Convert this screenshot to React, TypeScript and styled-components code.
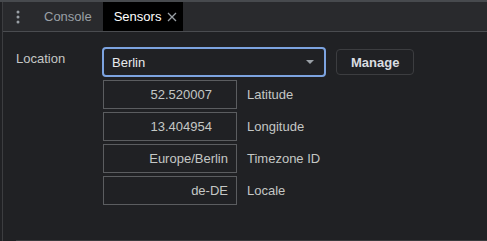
import * as React from 'react'
import styled, { createGlobalStyle } from 'styled-components'

const GlobalStyle = createGlobalStyle`
  html, body {
    margin: 0;
    padding: 0;
    background: #202124;
  }
  body {
    font-family: 'Liberation Sans', Arial, sans-serif;
    font-size: 13px;
    color: #e8eaed;
  }
  #root {
    height: 241px;
    overflow: hidden;
  }
`

const Frame = styled.div`
  height: 100%;
  display: flex;
  flex-direction: column;
  border-top: 2px solid #474a4e;
  box-sizing: border-box;
  padding-left: 2px;
`

const Body = styled.div`
  flex: 1;
  display: flex;
  flex-direction: column;
  border-left: 1px solid #3c3d40;
`

const TabBar = styled.div`
  height: 29px;
  display: flex;
  align-items: stretch;
  background: #292a2d;
  border-bottom: 1px solid #4a4c50;
`

const MenuButton = styled.div`
  width: 30px;
  display: flex;
  align-items: center;
  justify-content: center;
`

const Tab = styled.div<{ $active?: boolean }>`
  display: flex;
  align-items: center;
  gap: 6px;
  padding: 0 ${(p) => (p.$active ? '6px' : '11px')} 0 11px;
  background: ${(p) => (p.$active ? '#000000' : 'transparent')};
  color: ${(p) => (p.$active ? '#ffffff' : '#9aa0a6')};
  font-size: 13px;
`

const CloseIcon = styled.span`
  display: flex;
  align-items: center;
`

const Content = styled.div`
  flex: 1;
  padding: 15px 0 0 13px;
  display: flex;
  flex-direction: column;
`

const Section = styled.div`
  flex: 1;
  display: grid;
  grid-template-columns: 86px auto;
  align-content: start;
  border-bottom: 1px solid #3a3b3e;
`

const FieldLabel = styled.div`
  padding-top: 4px;
  color: #c4c7c5;
`

const Fields = styled.div`
  display: flex;
  flex-direction: column;
  gap: 3px;
`

const SelectRow = styled.div`
  display: flex;
  align-items: center;
  gap: 10px;
`

const Select = styled.div`
  width: 224px;
  height: 30px;
  box-sizing: border-box;
  border: 2px solid #7ca3e0;
  border-radius: 4px;
  background: #202124;
  display: flex;
  align-items: center;
  justify-content: space-between;
  padding: 0 10px 0 8px;
  font-size: 13px;
  color: #e8eaed;
`

const Caret = styled.span`
  width: 0;
  height: 0;
  border-left: 4px solid transparent;
  border-right: 4px solid transparent;
  border-top: 4px solid #9aa0a6;
`

const Button = styled.div`
  height: 24px;
  padding: 0 14px;
  border: 1px solid #3c3d40;
  border-radius: 4px;
  display: flex;
  align-items: center;
  font-weight: bold;
  color: #dadce0;
  font-size: 13px;
`

const InputRow = styled.div`
  display: flex;
  align-items: center;
  gap: 10px;
  margin-left: 1px;
`

const Input = styled.div<{ $numeric?: boolean }>`
  width: 134px;
  height: 29px;
  border: 1px solid #5b5d60;
  box-sizing: border-box;
  display: flex;
  align-items: center;
  justify-content: flex-end;
  padding-right: ${(p) => (p.$numeric ? '24px' : '8px')};
  color: #c4c7c5;
  font-size: 13px;
`

const InputLabel = styled.div`
  color: #c4c7c5;
`

const rows = [
  { value: '52.520007', label: 'Latitude', numeric: true },
  { value: '13.404954', label: 'Longitude', numeric: true },
  { value: 'Europe/Berlin', label: 'Timezone ID', numeric: false },
  { value: 'de-DE', label: 'Locale', numeric: false },
]

const App: React.FC = () => {
  return (
    <>
      <GlobalStyle />
      <Frame>
        <Body>
          <TabBar>
            <MenuButton>
              <svg width="4" height="14" viewBox="0 0 4 14">
                <circle cx="2" cy="2" r="1.5" fill="#9aa0a6" />
                <circle cx="2" cy="7" r="1.5" fill="#9aa0a6" />
                <circle cx="2" cy="12" r="1.5" fill="#9aa0a6" />
              </svg>
            </MenuButton>
            <Tab>Console</Tab>
            <Tab $active>
              Sensors
              <CloseIcon>
                <svg width="10" height="10" viewBox="0 0 10 10">
                  <path d="M1 1L9 9M9 1L1 9" stroke="#9aa0a6" strokeWidth="1.3" />
                </svg>
              </CloseIcon>
            </Tab>
          </TabBar>
          <Content>
            <Section>
              <FieldLabel>Location</FieldLabel>
              <Fields>
                <SelectRow>
                  <Select>
                    Berlin
                    <Caret />
                  </Select>
                  <Button>Manage</Button>
                </SelectRow>
                {rows.map((r) => (
                  <InputRow key={r.label}>
                    <Input $numeric={r.numeric}>{r.value}</Input>
                    <InputLabel>{r.label}</InputLabel>
                  </InputRow>
                ))}
              </Fields>
            </Section>
          </Content>
        </Body>
      </Frame>
    </>
  )
}

export default App
